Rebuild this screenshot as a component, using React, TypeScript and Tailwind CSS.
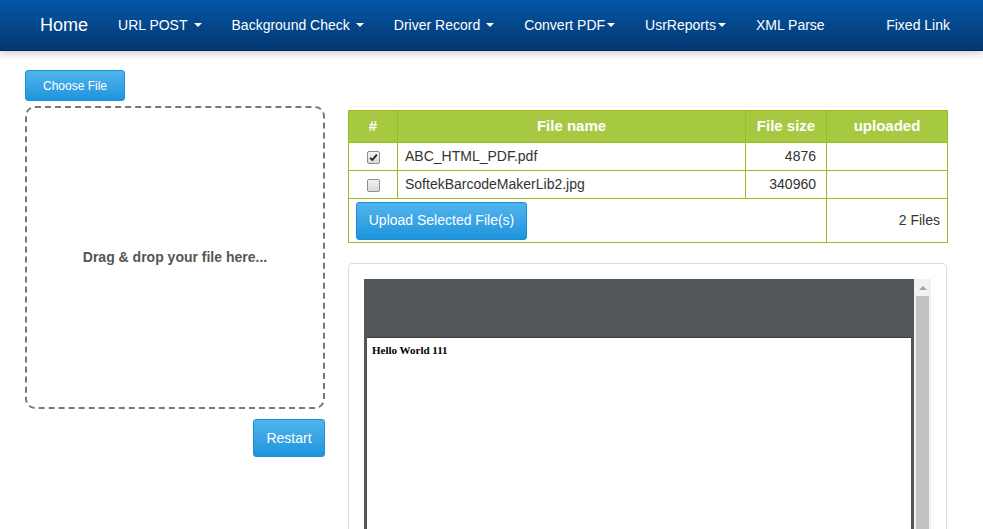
import React from "react";

const Caret = ({ space = true }: { space?: boolean }) => (
  <span
    className={`inline-block w-0 h-0 border-t-[4px] border-t-white border-x-[4px] border-x-transparent align-middle ${space ? "ml-[6px]" : "ml-[2px]"}`}
  />
);

const NavItem = ({ label, caret, space = true }: { label: string; caret?: boolean; space?: boolean }) => (
  <div className="px-[15px] flex items-center text-[14px] text-white whitespace-nowrap">
    {label}
    {caret && <Caret space={space} />}
  </div>
);

const Check = ({ checked }: { checked?: boolean }) => (
  <span className="inline-flex w-[13px] h-[13px] border border-[#8e8e8e] rounded-[2px] bg-gradient-to-b from-[#f4f4f4] to-[#d8d8d8] items-center justify-center align-middle">
    {checked && (
      <svg width="9" height="9" viewBox="0 0 9 9">
        <path d="M1.2 4.8 L3.4 7 L7.8 1.6" fill="none" stroke="#222" strokeWidth="1.8" />
      </svg>
    )}
  </span>
);

const blueBtn =
  "bg-gradient-to-b from-[#50b5ed] to-[#1c94dc] border border-[#1b8ed6] text-white rounded-[3px]";

export default function App() {
  return (
    <div className="w-[983px] h-[529px] overflow-hidden bg-white" style={{ fontFamily: '"Liberation Sans", Arial, sans-serif' }}>
      {/* Navbar */}
      <div className="relative h-[51px] bg-gradient-to-b from-[#0457a6] to-[#043772] border-b border-[#02264f] flex items-stretch pl-[25px] pr-[18px] shadow-[0_3px_8px_rgba(0,0,0,0.18)]">
        <div className="px-[15px] flex items-center text-[18px] text-white">Home</div>
        <NavItem label="URL POST" caret />
        <NavItem label="Background Check" caret />
        <NavItem label="Driver Record" caret />
        <NavItem label="Convert PDF" caret space={false} />
        <NavItem label="UsrReports" caret space={false} />
        <NavItem label="XML Parse" />
        <div className="flex-1" />
        <NavItem label="Fixed Link" />
      </div>

      <div className="flex pl-[25px] pt-[19px] gap-[23px]">
        {/* Left column */}
        <div className="w-[300px] flex flex-col">
          <button className={`${blueBtn} w-[100px] h-[31px] text-[12px]`}>Choose File</button>
          <div className="mt-[5px] h-[303px] border-2 border-dashed border-[#777] rounded-[10px] flex items-center justify-center">
            <span className="text-[14px] font-bold text-[#555]">Drag &amp; drop your file here...</span>
          </div>
          <div className="flex justify-end mt-[10px]">
            <button className={`${blueBtn} w-[72px] h-[38px] text-[14px]`}>Restart</button>
          </div>
        </div>

        {/* Right column */}
        <div className="w-[599px] pt-[40px]">
          <table className="w-[599px] border-collapse text-[14px] text-[#333]" style={{ tableLayout: "fixed" }}>
            <colgroup>
              <col className="w-[49px]" />
              <col className="w-[348px]" />
              <col className="w-[81px]" />
              <col className="w-[121px]" />
            </colgroup>
            <thead>
              <tr className="h-[32px] bg-[#a7c942] text-white text-[15px] font-bold">
                <th className="border border-[#98bf21] text-center">#</th>
                <th className="border border-[#98bf21] text-center">File name</th>
                <th className="border border-[#98bf21] text-center">File size</th>
                <th className="border border-[#98bf21] text-center">uploaded</th>
              </tr>
            </thead>
            <tbody>
              <tr className="h-[28px]">
                <td className="border border-[#98bf21] text-center align-middle">
                  <Check checked />
                </td>
                <td className="border border-[#98bf21] px-[7px]">ABC_HTML_PDF.pdf</td>
                <td className="border border-[#98bf21] px-[10px] text-right">4876</td>
                <td className="border border-[#98bf21]"></td>
              </tr>
              <tr className="h-[28px]">
                <td className="border border-[#98bf21] text-center align-middle">
                  <Check />
                </td>
                <td className="border border-[#98bf21] px-[7px]">SoftekBarcodeMakerLib2.jpg</td>
                <td className="border border-[#98bf21] px-[10px] text-right">340960</td>
                <td className="border border-[#98bf21]"></td>
              </tr>
              <tr className="h-[44px]">
                <td colSpan={3} className="border border-[#98bf21] px-[7px] align-middle">
                  <button className={`${blueBtn} w-[171px] h-[38px] text-[14px] block`}>Upload Selected File(s)</button>
                </td>
                <td className="border border-[#98bf21] px-[7px] text-right">2 Files</td>
              </tr>
            </tbody>
          </table>

          {/* Preview panel */}
          <div className="mt-[20px] border border-[#ddd] rounded-[4px] pt-[15px] px-[15px] h-[300px]">
            <div className="flex h-[300px]">
              <div className="flex-1 bg-[#525659] flex flex-col pt-[58px] px-[3px]">
                <div
                  className="flex-1 bg-white border-t border-[#3a3c3e] pl-[5px] pt-[5px] text-[11px] leading-[14px] font-bold text-black"
                  style={{ fontFamily: '"Liberation Serif", "Times New Roman", serif' }}
                >
                  Hello World 111
                </div>
              </div>
              <div className="w-[17px] bg-[#f1f1f1] flex flex-col items-center">
                <div className="h-[17px] flex items-center justify-center">
                  <span className="w-0 h-0 border-b-[4px] border-b-[#a3a3a3] border-x-[4px] border-x-transparent" />
                </div>
                <div className="w-[13px] flex-1 bg-[#c1c1c1]" />
              </div>
            </div>
          </div>
        </div>
      </div>
    </div>
  );
}
